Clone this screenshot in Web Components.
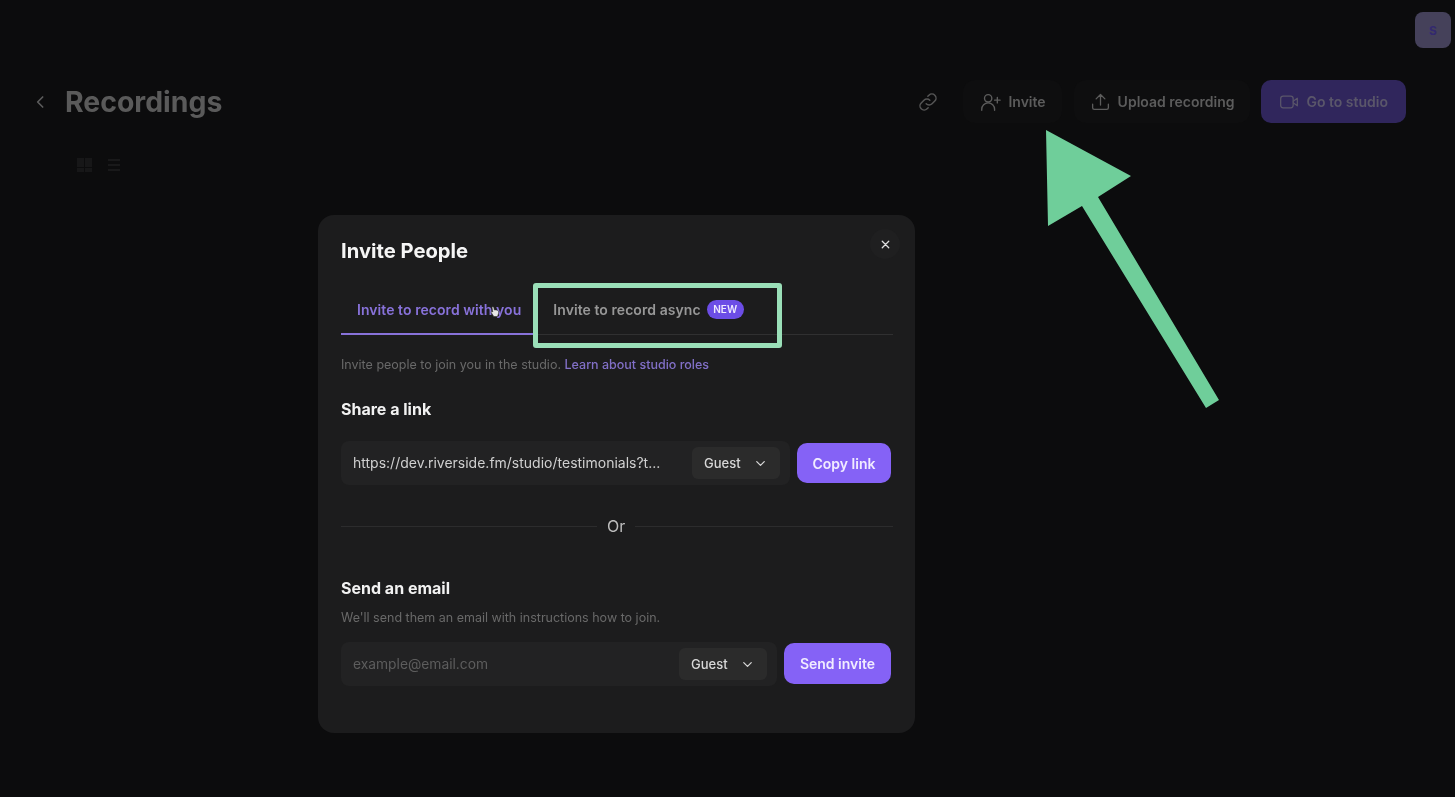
<!DOCTYPE html>
<html>
<head>
<meta charset="utf-8">
<title>Recordings</title>
<style>
  html, body { margin: 0; height: 100%; }
  body { background: #0c0c0d; overflow: hidden; font-family: Inter, "Liberation Sans", sans-serif; }
</style>
</head>
<body>
<rec-page></rec-page>
<invite-modal></invite-modal>
<tutorial-marks></tutorial-marks>

<script>
const ICONS = {
  back: '<path d="M14 6l-6 6 6 6"/>',
  link: '<path d="M10 14a4.5 4.5 0 0 0 6.4 0l3-3a4.5 4.5 0 0 0-6.4-6.4l-1.2 1.2"/><path d="M14 10a4.5 4.5 0 0 0-6.4 0l-3 3a4.5 4.5 0 0 0 6.4 6.4l1.2-1.2"/>',
  userplus: '<circle cx="10" cy="8" r="4"/><path d="M3 21v-1a7 7 0 0 1 14 0v1"/><path d="M20 7v6M17 10h6"/>',
  upload: '<path d="M12 16V4M7 9l5-5 5 5"/><path d="M3 15v4a2 2 0 0 0 2 2h14a2 2 0 0 0 2-2v-4"/>',
  video: '<rect x="2" y="5" width="15" height="14" rx="3"/><path d="M17 11l5-3.5v9L17 13"/>',
  chevron: '<path d="M6 9l6 6 6-6"/>',
  close: '<path d="M6 6l12 12M18 6L6 18"/>'
};

function icon(name, size, width) {
  return `<svg width="${size}" height="${size}" viewBox="0 0 24 24" fill="none" stroke="currentColor" stroke-width="${width || 2}" stroke-linecap="round" stroke-linejoin="round">${ICONS[name]}</svg>`;
}

class HeaderButton extends HTMLElement {
  connectedCallback() {
    this.attachShadow({ mode: 'open' });
    const glyph = this.getAttribute('icon');
    const size = this.getAttribute('size') || 22;
    this.shadowRoot.innerHTML = `
      <style>
        :host { display: flex; align-items: center; gap: 7px; height: 43px; padding: 0 16px; box-sizing: border-box;
                border-radius: 12px; background: #0e0e0f; color: #5c5c5c; font-size: 14px; font-weight: 600; }
        :host([primary]) { background: #30265c; color: #5a566a; padding: 0 18px; border-radius: 10px; }
        svg { display: block; flex: none; }
      </style>
      ${icon(glyph, size, 1.5)}<slot></slot>`;
  }
}
customElements.define('header-button', HeaderButton);

class RecPage extends HTMLElement {
  constructor() {
    super();
    this.attachShadow({ mode: 'open' });
    this.shadowRoot.innerHTML = `
      <style>
        :host { display: block; filter: blur(.4px); }
        .account { display: flex; justify-content: flex-end; padding: 12px 4px 0 0; height: 36px; }
        .avatar { width: 36px; height: 36px; border-radius: 8px; background: #45415a; color: #33296f;
                  display: flex; align-items: center; justify-content: center; font-size: 12px; font-weight: 700; }
        .head { display: flex; align-items: center; margin-top: 32px; padding: 0 49px 0 31px; height: 43px; }
        .back { color: #5c5c5c; display: flex; width: 34px; }
        h1 { margin: 0; font-size: 28.4px; font-weight: 700; color: #5a5a5a; flex: 1; }
        .actions { display: flex; align-items: center; gap: 12px; }
        .chain { color: #565656; display: flex; margin-right: 12px; }
        .go { margin-left: -1px; }
        .views { display: flex; gap: 16px; margin: 35px 0 0 77px; }
        .grid { display: grid; grid-template-columns: 7px 7px; grid-template-rows: 9px 4px; gap: 1px; height: 14px; }
        .grid i { background: #171718; display: block; }
        .lines { display: flex; flex-direction: column; justify-content: space-between; width: 12px; height: 12px; margin-top: 1px; }
        .lines i { display: block; height: 2px; background: #19191a; }
      </style>
      <div class="account"><div class="avatar">S</div></div>
      <div class="head">
        <span class="back">${icon('back', 20, 2)}</span>
        <h1>Recordings</h1>
        <div class="actions">
          <span class="chain">${icon('link', 22, 1.6)}</span>
          <header-button icon="userplus">Invite</header-button>
          <header-button icon="upload" size="21">Upload recording</header-button>
          <header-button icon="video" size="20" class="go" primary>Go to studio</header-button>
        </div>
      </div>
      <div class="views">
        <div class="grid"><i></i><i></i><i></i><i></i></div>
        <div class="lines"><i></i><i></i><i></i></div>
      </div>`;
  }
}
customElements.define('rec-page', RecPage);

class RoleSelect extends HTMLElement {
  constructor() {
    super();
    this.attachShadow({ mode: 'open' });
    this.shadowRoot.innerHTML = `
      <style>
        :host { display: flex; align-items: center; justify-content: space-between; flex: none; box-sizing: border-box;
                width: 88px; height: 32px; padding: 0 12px; border-radius: 6px; background: #2b2b2b;
                color: #d8d8d8; font-size: 13px; font-weight: 500; }
        svg { display: block; }
      </style>
      <slot></slot>${icon('chevron', 15, 2)}`;
  }
}
customElements.define('role-select', RoleSelect);

class InviteRow extends HTMLElement {
  constructor() {
    super();
    this.attachShadow({ mode: 'open' });
    this.shadowRoot.innerHTML = `
      <style>
        :host { display: flex; align-items: center; gap: 7px; }
        .field { flex: 1; min-width: 0; height: 44px; box-sizing: border-box; display: flex; align-items: center;
                 padding: 0 10px 0 12px; border-radius: 8px; background: #222223; }
        .value { flex: 1; min-width: 0; padding-bottom: 2px; font-size: 14px; color: #d0d0d0; white-space: nowrap; }
        .send { flex: none; display: flex; align-items: center; justify-content: center; box-sizing: border-box;
                height: var(--action-height); width: var(--action-width); margin-bottom: var(--action-lift, 0);
                border-radius: 10px; background: #8562f6; color: #f1ecff; font-size: 14px; font-weight: 600; }
      </style>
      <div class="field"><div class="value"><slot name="value"></slot></div><role-select>Guest</role-select></div>
      <div class="send"><slot name="action"></slot></div>`;
  }
}
customElements.define('invite-row', InviteRow);

class InviteModal extends HTMLElement {
  constructor() {
    super();
    this.attachShadow({ mode: 'open' });
    this.shadowRoot.innerHTML = `
      <style>
        :host { position: absolute; left: 318px; top: 215px; width: 597px; height: 518px; box-sizing: border-box;
                padding: 23px 22px 0 23px; background: #1c1c1d; border-radius: 16px; color: #fff; display: block;
                filter: blur(.4px); }
        .close { position: absolute; right: 15px; top: 14px; width: 30px; height: 30px; border-radius: 50%;
                 background: #1f1f20; color: #e0e0e0; display: flex; align-items: center; justify-content: center; }
        h2 { margin: 0; font-size: 20.2px; line-height: 26px; font-weight: 700; color: #f5f5f5; }
        .tabs { display: flex; margin-top: 26px; height: 44px; border-bottom: 1px solid #303031; }
        .tab { display: flex; align-items: center; gap: 6px; padding: 0 16px 4px; font-size: 14px; letter-spacing: .06px; font-weight: 600; color: #979797;
               white-space: nowrap; box-sizing: border-box; height: 45px; border-bottom: 2px solid transparent; }
        .tab.on { color: #8872da; border-bottom-color: #8872da; }
        .new { background: #6c4de6; color: #efeaff; font-size: 10px; font-weight: 600; padding: 0 6.5px; line-height: 19px; border-radius: 10px; }
        .note { margin: 22px 0 0; font-size: 12.5px; line-height: 16px; color: #696969; }
        .note a { color: #8270c8; font-weight: 500; text-decoration: none; }
        h3 { margin: 0; font-size: 16px; line-height: 20px; font-weight: 700; color: #f2f2f2; }
        .share { margin-top: 26px; }
        .share + invite-row { margin-top: 22px; }
        .or { display: flex; align-items: center; gap: 10px; margin-top: 30px; font-size: 16px; line-height: 22px; color: #bdbdbd; }
        .or::before, .or::after { content: ""; height: 1px; background: #2c2c2d; }
        .or::before { flex: none; width: 256px; }
        .or::after { flex: 1; }
        .mail { margin-top: 41px; }
        .mail-note { margin: 12px 0 16px; }
        .narrow { margin-right: 2px; }
        .copy { --action-width: 94px; --action-height: 40px; }
        .invite { --action-width: 107px; --action-height: 41px; --action-lift: 2px; }
        .hint { color: #5d5d5d; font-size: 13.8px; }
      </style>
      <div class="close">${icon('close', 13, 2.4)}</div>
      <h2>Invite People</h2>
      <div class="tabs">
        <div class="tab on">Invite to record with you</div>
        <div class="tab">Invite to record async <span class="new">NEW</span></div>
      </div>
      <p class="note">Invite people to join you in the studio. <a>Learn about studio roles</a></p>
      <h3 class="share">Share a link</h3>
      <invite-row class="narrow copy">
        <span slot="value">https://dev.riverside.fm/studio/testimonials?t...</span>
        <span slot="action">Copy link</span>
      </invite-row>
      <div class="or">Or</div>
      <h3 class="mail">Send an email</h3>
      <p class="note mail-note">We'll send them an email with instructions how to join.</p>
      <invite-row class="narrow invite">
        <span slot="value" class="hint">example@email.com</span>
        <span slot="action">Send invite</span>
      </invite-row>`;
  }
}
customElements.define('invite-modal', InviteModal);

// green marks drawn over the recording, plus the mouse pointer
class TutorialMarks extends HTMLElement {
  constructor() {
    super();
    this.attachShadow({ mode: 'open' });
    this.shadowRoot.innerHTML = `
      <style>
        :host { position: absolute; inset: 0; display: block; pointer-events: none; }
        .box { position: absolute; left: 533px; top: 283px; width: 249px; height: 65px; box-sizing: border-box;
               border: 5.5px solid #9adfb8; border-radius: 3px; }
        svg { position: absolute; left: 0; top: 0; }
      </style>
      <div class="box"></div>
      <svg width="1455" height="797" viewBox="0 0 1455 797">
        <polygon fill="#6fce9a" points="1046,130 1131,176 1098,197 1219,400 1206,408 1082,206 1048,226"/>
        <path fill="#e8e8e8" stroke="#333" stroke-width=".6" d="M492 307.5c0-1 1.6-1 1.8 0l.5 2.5c1.4-.3 3.7.2 4.2 1 .5 1-.2 4-1.2 5.5h-3.5l-2.6-4c-.5-1 .8-1.5 1.6-.5z"/>
      </svg>`;
  }
}
customElements.define('tutorial-marks', TutorialMarks);
</script>
</body>
</html>
